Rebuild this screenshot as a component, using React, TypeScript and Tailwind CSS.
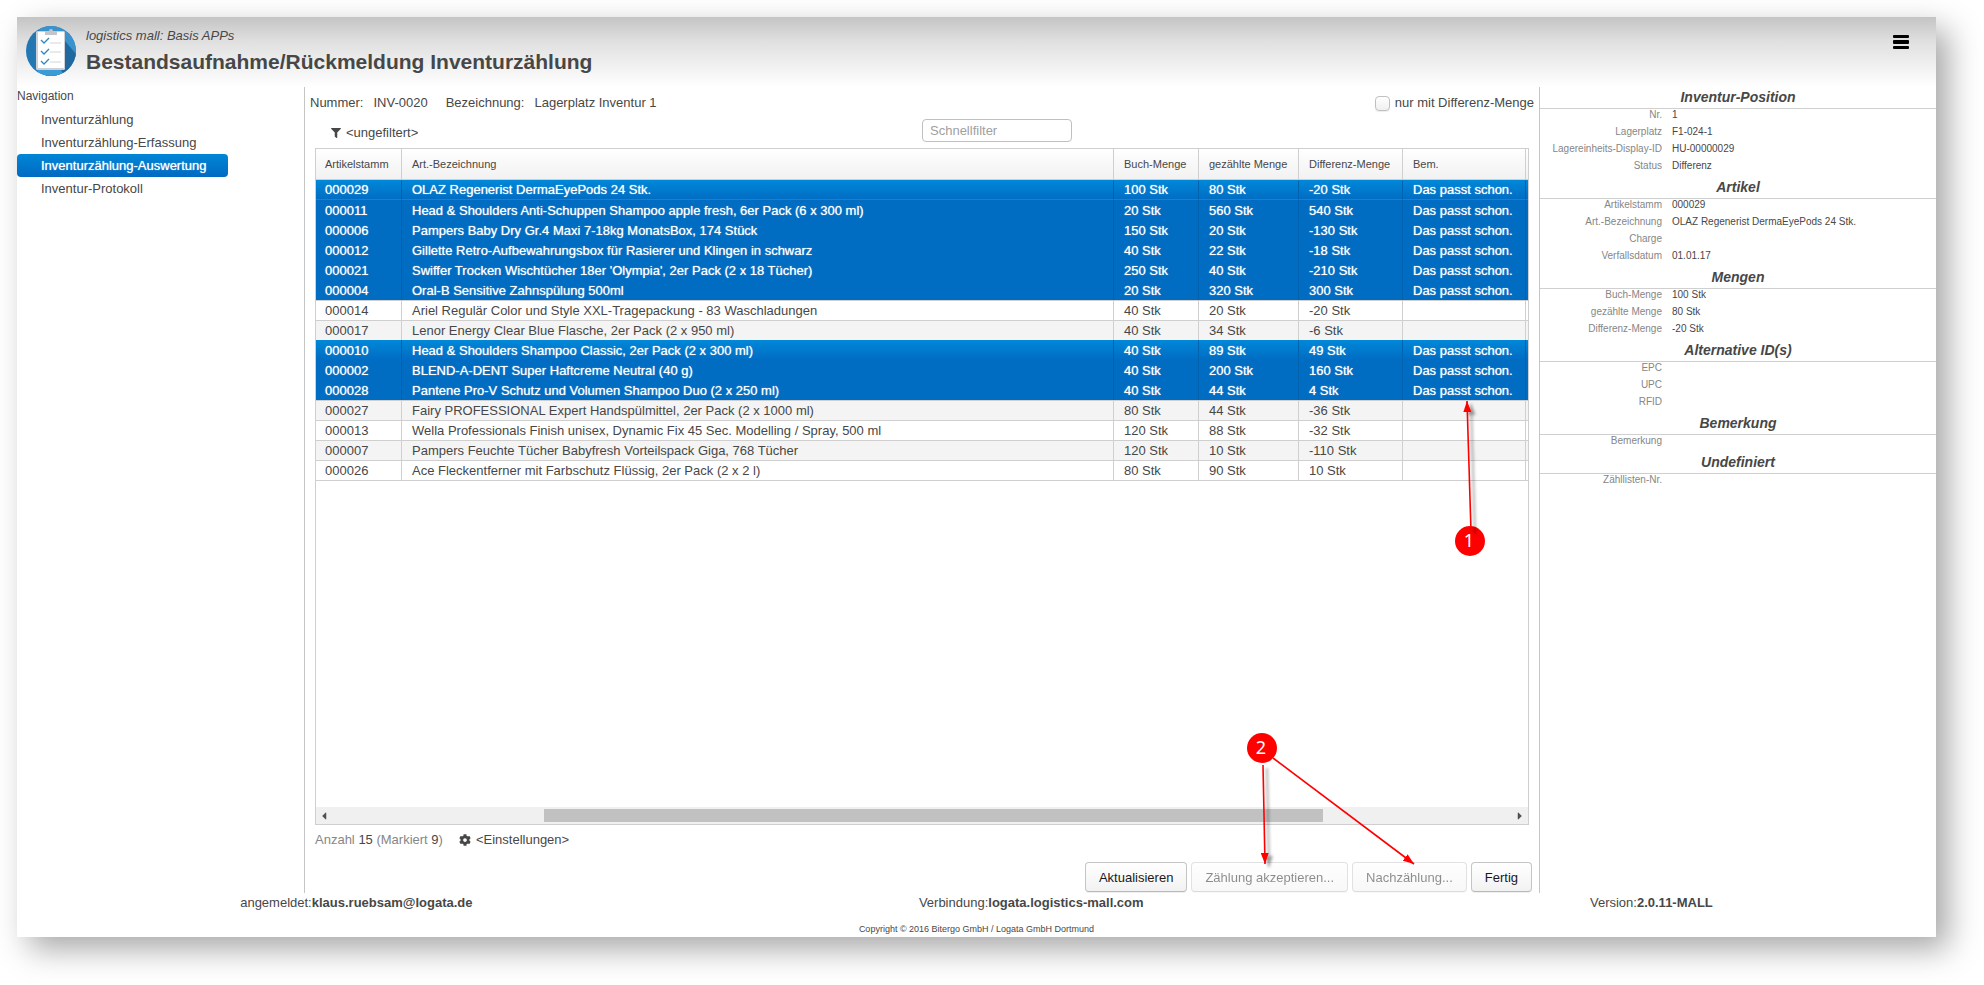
import React, { useState } from "react";
import { FaCaretLeft, FaCaretRight, FaCog, FaFilter } from "react-icons/fa";
import clsx from "clsx";

type Row = {
  id: string;
  name: string;
  booked: string;
  counted: string;
  diff: string;
  note?: string;
};

const NOTE = "Das passt schon.";

const rows: Row[] = [
  { id: "000029", name: "OLAZ Regenerist DermaEyePods 24 Stk.", booked: "100 Stk", counted: "80 Stk", diff: "-20 Stk", note: NOTE },
  { id: "000011", name: "Head & Shoulders Anti-Schuppen Shampoo apple fresh, 6er Pack (6 x 300 ml)", booked: "20 Stk", counted: "560 Stk", diff: "540 Stk", note: NOTE },
  { id: "000006", name: "Pampers Baby Dry Gr.4 Maxi 7-18kg MonatsBox, 174 Stück", booked: "150 Stk", counted: "20 Stk", diff: "-130 Stk", note: NOTE },
  { id: "000012", name: "Gillette Retro-Aufbewahrungsbox für Rasierer und Klingen in schwarz", booked: "40 Stk", counted: "22 Stk", diff: "-18 Stk", note: NOTE },
  { id: "000021", name: "Swiffer Trocken Wischtücher 18er 'Olympia', 2er Pack (2 x 18 Tücher)", booked: "250 Stk", counted: "40 Stk", diff: "-210 Stk", note: NOTE },
  { id: "000004", name: "Oral-B Sensitive Zahnspülung 500ml", booked: "20 Stk", counted: "320 Stk", diff: "300 Stk", note: NOTE },
  { id: "000014", name: "Ariel Regulär Color und Style XXL-Tragepackung - 83 Waschladungen", booked: "40 Stk", counted: "20 Stk", diff: "-20 Stk" },
  { id: "000017", name: "Lenor Energy Clear Blue Flasche, 2er Pack (2 x 950 ml)", booked: "40 Stk", counted: "34 Stk", diff: "-6 Stk" },
  { id: "000010", name: "Head & Shoulders Shampoo Classic, 2er Pack (2 x 300 ml)", booked: "40 Stk", counted: "89 Stk", diff: "49 Stk", note: NOTE },
  { id: "000002", name: "BLEND-A-DENT Super Haftcreme Neutral (40 g)", booked: "40 Stk", counted: "200 Stk", diff: "160 Stk", note: NOTE },
  { id: "000028", name: "Pantene Pro-V Schutz und Volumen Shampoo Duo (2 x 250 ml)", booked: "40 Stk", counted: "44 Stk", diff: "4 Stk", note: NOTE },
  { id: "000027", name: "Fairy PROFESSIONAL Expert Handspülmittel, 2er Pack (2 x 1000 ml)", booked: "80 Stk", counted: "44 Stk", diff: "-36 Stk" },
  { id: "000013", name: "Wella Professionals Finish unisex, Dynamic Fix 45 Sec. Modelling / Spray, 500 ml", booked: "120 Stk", counted: "88 Stk", diff: "-32 Stk" },
  { id: "000007", name: "Pampers Feuchte Tücher Babyfresh Vorteilspack Giga, 768 Tücher", booked: "120 Stk", counted: "10 Stk", diff: "-110 Stk" },
  { id: "000026", name: "Ace Fleckentferner mit Farbschutz Flüssig, 2er Pack (2 x 2 l)", booked: "80 Stk", counted: "90 Stk", diff: "10 Stk" },
];

const columns = ["Artikelstamm", "Art.-Bezeichnung", "Buch-Menge", "gezählte Menge", "Differenz-Menge", "Bem.", ""];

const navItems = ["Inventurzählung", "Inventurzählung-Erfassung", "Inventurzählung-Auswertung", "Inventur-Protokoll"];

const details = [
  {
    title: "Inventur-Position",
    fields: [["Nr.", "1"], ["Lagerplatz", "F1-024-1"], ["Lagereinheits-Display-ID", "HU-00000029"], ["Status", "Differenz"]],
  },
  {
    title: "Artikel",
    fields: [["Artikelstamm", "000029"], ["Art.-Bezeichnung", "OLAZ Regenerist DermaEyePods 24 Stk."], ["Charge", ""], ["Verfallsdatum", "01.01.17"]],
  },
  {
    title: "Mengen",
    fields: [["Buch-Menge", "100 Stk"], ["gezählte Menge", "80 Stk"], ["Differenz-Menge", "-20 Stk"]],
  },
  { title: "Alternative ID(s)", fields: [["EPC", ""], ["UPC", ""], ["RFID", ""]] },
  { title: "Bemerkung", fields: [["Bemerkung", ""]] },
  { title: "Undefiniert", fields: [["Zähllisten-Nr.", ""]] },
];

function Logo() {
  return (
    <svg viewBox="0 0 50 50" className="size-[50px] shrink-0" aria-hidden="true">
      <defs>
        <clipPath id="disc">
          <circle cx="25" cy="25" r="25" />
        </clipPath>
      </defs>
      <g clipPath="url(#disc)">
        <rect width="50" height="50" fill="#2377b3" />
        <path d="M10 0h40v34L39 18V6H14z" fill="#3a93cd" />
        <path d="M39 15l11 13v22H20l-6-6h25z" fill="#20699f" />
        <path d="M11 44h24l3 6H14z" fill="#3a9bd6" />
      </g>
      <rect x="10" y="5" width="29" height="39" rx="1.5" fill="#cdd0d6" />
      <rect x="12" y="6" width="26" height="36" fill="#fff" />
      <path d="M19 5h4a2 2 0 0 1 4 0h4v4H19z" fill="#c3c5cb" />
      <path d="M24 26h11M24 17h11M24 36h11" stroke="#d4d5d9" />
      <path d="M15 14l3 3 5-5M15 25l3 3 5-5M15 35l3 3 5-5" fill="none" stroke="#2e86c3" strokeWidth="1.3" />
    </svg>
  );
}

function Header() {
  return (
    <header className="flex h-[70px] justify-between bg-linear-to-b from-[#c4c4c4] via-[#e0e0e0] via-35% to-white pl-[9px]">
      <div className="flex gap-[10px] pt-[9px]">
        <Logo />
        <div>
          <p className="text-[13px] leading-5 italic">logistics mall: Basis APPs</p>
          <h1 className="text-[21px] leading-8 font-bold">Bestandsaufnahme/Rückmeldung Inventurzählung</h1>
        </div>
      </div>
      <button type="button" aria-label="Menü" className="mt-4 mr-[25px] size-5 self-start text-black">
        <svg viewBox="0 0 20 20" className="size-5" fill="currentColor">
          <rect x="2" y="2" width="16" height="3" rx="1" />
          <rect x="2" y="7" width="16" height="4" rx="1" />
          <rect x="2" y="13" width="16" height="3" rx="1" />
        </svg>
      </button>
    </header>
  );
}

function Sidebar() {
  return (
    <nav className="w-72 shrink-0 border-r border-[#c5c5c5]">
      <h2 className="h-[21px] text-[12px] leading-[18px]">Navigation</h2>
      <ul className="w-[211px]">
        {navItems.map((item, i) => (
          <li key={item}>
            <a
              href="#"
              className={clsx(
                "block pl-6 leading-[23px]",
                i === 2 && "rounded bg-linear-to-b from-[#0086d6] to-[#006ac2] text-white [text-shadow:0_0_1px_rgba(255,255,255,0.8)]"
              )}
            >
              {item}
            </a>
          </li>
        ))}
      </ul>
    </nav>
  );
}

function PositionTable() {
  return (
    <table className="w-full table-fixed border-separate border-spacing-0 text-left">
      <colgroup>
        <col className="w-[85px]" />
        <col />
        <col className="w-[85px]" />
        <col className="w-[100px]" />
        <col className="w-[104px]" />
        <col className="w-[123px]" />
        <col className="w-[3px]" />
      </colgroup>
      <thead>
        <tr className="bg-linear-to-b from-white to-[#f1f1f1]">
          {columns.map((c, i) => (
            <th
              key={i}
              className={clsx(
                "h-[31px] border-b border-[#cfcfcf] p-0 text-[11px] font-normal whitespace-nowrap",
                i > 0 && "border-l",
                i < 6 && (i === 0 ? "pl-[9px]" : "pl-[10px]")
              )}
            >
              {c}
            </th>
          ))}
        </tr>
      </thead>
      <tbody>
        {rows.map((r, i) => {
          const selected = !!r.note;
          const blockStart = selected && !rows[i - 1]?.note;
          const cells = [r.id, r.name, r.booked, r.counted, r.diff, r.note, ""];
          return (
            <tr
              key={r.id}
              className={clsx(
                selected && "text-white [text-shadow:0_0_1px_rgba(255,255,255,0.8)]",
                selected && (blockStart ? "bg-linear-to-b from-[#0088d8] to-[#006cc3]" : "bg-[#006dc3]"),
                !selected && (i % 2 ? "bg-[#f4f4f4]" : "bg-white")
              )}
            >
              {cells.map((cell, j) => (
                <td
                  key={j}
                  className={clsx(
                    "overflow-hidden border-t p-0 whitespace-nowrap",
                    selected ? "border-t-transparent border-l-[#0061ae]" : "border-[#cfcfcf]",
                    j > 0 && "border-l",
                    j < 6 && (j === 0 ? "pl-[9px]" : "pl-[10px]"),
                    // the focused row carries a light line at its foot
                    i === 0 ? "border-b border-b-[#1a7fd0] leading-[18px]" : "leading-[19px]",
                    i === rows.length - 1 && "border-b"
                  )}
                >
                  {cell}
                </td>
              ))}
            </tr>
          );
        })}
      </tbody>
    </table>
  );
}

function Scrollbar() {
  return (
    <div className="flex h-[17px] items-center bg-[#f0f0f0] text-[#505050]">
      <button type="button" aria-label="Nach links" className="flex w-4 justify-center">
        <FaCaretLeft size={12} />
      </button>
      <div className="flex-1">
        <div className="ml-[18%] h-[13px] w-[66%] bg-[#c1c1c1]" />
      </div>
      <button type="button" aria-label="Nach rechts" className="flex w-4 justify-center">
        <FaCaretRight size={12} />
      </button>
    </div>
  );
}

function ActionButton({ children, disabled }: { children: React.ReactNode; disabled?: boolean }) {
  return (
    <button
      type="button"
      disabled={disabled}
      className="h-[30px] rounded border border-[#c5c5c5] border-b-[#b8b8b8] bg-linear-to-b from-white to-[#f2f2f2] px-[13px] pt-px text-[#191919] shadow-[0_1px_0_rgba(0,0,0,0.06)] disabled:opacity-50"
    >
      {children}
    </button>
  );
}

// numbered hints and their arrows, laid over the work area
function Hints() {
  return (
    <svg
      viewBox="0 0 300 500"
      className="pointer-events-none absolute right-0 bottom-0 h-[500px] w-[300px] [font-family:'Noto_Sans',sans-serif] text-[18px]"
    >
      <defs>
        <marker id="head" viewBox="0 0 11 8" refX="11" refY="4" markerWidth="11" markerHeight="8" markerUnits="userSpaceOnUse" orient="auto">
          <path d="M0 0L11 4 0 8z" fill="#f00" />
        </marker>
        <filter id="drop" x="-100%" y="-10%" width="300%" height="130%">
          <feDropShadow dx="4" dy="3" stdDeviation="1.5" floodOpacity="0.4" />
        </filter>
      </defs>
      <g fill="#f00">
        <circle cx="231" cy="148" r="15" />
        <circle cx="23" cy="355" r="15" />
      </g>
      <g stroke="#f00" strokeWidth="1.6" filter="url(#drop)">
        <path d="M232 138L228 8" markerEnd="url(#head)" />
        <path d="M24 372L26 471" markerEnd="url(#head)" />
      </g>
      <path d="M34 365L175 471" stroke="#f00" strokeWidth="1.6" markerEnd="url(#head)" />
      <g fill="#fff" textAnchor="middle">
        <text x="230" y="154">1</text>
        <text x="22" y="361">2</text>
      </g>
    </svg>
  );
}

function Workspace() {
  const [diffOnly, setDiffOnly] = useState(false);
  const [quick, setQuick] = useState("");

  return (
    <main className="relative flex min-w-0 flex-1 flex-col">
      <div className="flex h-8 items-center justify-between px-[5px]">
        <dl className="flex gap-[10px]">
          <dt>Nummer:</dt>
          <dd className="mr-2">INV-0020</dd>
          <dt>Bezeichnung:</dt>
          <dd>Lagerplatz Inventur 1</dd>
        </dl>
        <label className="flex items-center gap-[5px]">
          <input
            type="checkbox"
            checked={diffOnly}
            onChange={(e) => setDiffOnly(e.target.checked)}
            className="size-[15px] appearance-none rounded border border-[#c0c0c0] bg-linear-to-b from-white to-[#f0f0f0] shadow-[0_1px_1px_rgba(0,0,0,0.08)] checked:from-[#0086d6] checked:to-[#006ac2]"
          />
          nur mit Differenz-Menge
        </label>
      </div>

      <div className="mx-[10px] grid h-[29px] grid-cols-2 items-start">
        <button type="button" className="flex h-7 items-center gap-[5px] pl-4">
          <FaFilter size={10} /> &lt;ungefiltert&gt;
        </button>
        <input
          type="text"
          aria-label="Schnellfilter"
          placeholder="Schnellfilter"
          value={quick}
          onChange={(e) => setQuick(e.target.value)}
          className="h-[23px] w-[150px] rounded border border-[#c0c0c0] bg-white px-[7px] placeholder:text-[#a0a0a0]"
        />
      </div>

      <div className="mx-[10px] flex flex-1 flex-col justify-between border border-[#cfcfcf]">
        <PositionTable />
        <Scrollbar />
      </div>

      <div className="mx-[10px] flex h-7 items-center gap-4 pt-px">
        <p className="text-[#868686]">
          Anzahl <span className="text-[#474747]">15</span> (Markiert <span className="text-[#474747]">9</span>)
        </p>
        <button type="button" className="flex items-center gap-[5px]">
          <FaCog size={12} /> &lt;Einstellungen&gt;
        </button>
      </div>
      <div className="flex h-10 items-center justify-end gap-1 pt-2 pr-[7px]">
        <ActionButton>Aktualisieren</ActionButton>
        <ActionButton disabled>Zählung akzeptieren...</ActionButton>
        <ActionButton disabled>Nachzählung...</ActionButton>
        <ActionButton>Fertig</ActionButton>
      </div>
      <Hints />
    </main>
  );
}

function DetailPanel() {
  return (
    <aside className="w-[397px] shrink-0 border-l border-[#c5c5c5]">
      {details.map((d) => (
        <section key={d.title}>
          <h2 className="border-b border-[#cfcfcf] text-center text-[14px] leading-[21px] font-bold italic">{d.title}</h2>
          <dl className="text-[10px] leading-[12px]">
            {d.fields.map(([label, value]) => (
              <div key={label} className="flex h-[17px] gap-[10px]">
                <dt className="w-[122px] text-right text-[#868686]">{label}</dt>
                <dd>{value}</dd>
              </div>
            ))}
          </dl>
        </section>
      ))}
    </aside>
  );
}

export default function App() {
  return (
    <div className="flex min-h-screen bg-white pt-[17px] pr-12 pb-12 pl-[17px] [font-family:'Liberation_Sans',Arial,sans-serif] text-[13px] text-[#474747]">
      <div className="flex min-w-0 flex-1 flex-col bg-white shadow-[12px_12px_30px_rgba(0,0,0,0.35)]">
        <Header />
        <div className="flex flex-1">
          <Sidebar />
          <Workspace />
          <DetailPanel />
        </div>
        <footer className="h-11">
          <div className="flex h-7 justify-around leading-5">
            <p>angemeldet:<b>klaus.ruebsam@logata.de</b></p>
            <p>Verbindung:<b>logata.logistics-mall.com</b></p>
            <p>Version:<b>2.0.11-MALL</b></p>
          </div>
          <p className="text-center text-[9px] leading-4">Copyright © 2016 Bitergo GmbH / Logata GmbH Dortmund</p>
        </footer>
      </div>
    </div>
  );
}
